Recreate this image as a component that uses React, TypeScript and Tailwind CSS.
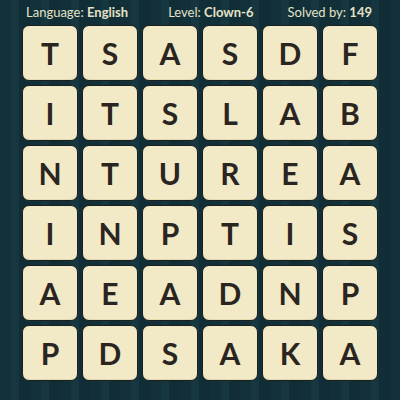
const rows = [
  ["T", "S", "A", "S", "D", "F"],
  ["I", "T", "S", "L", "A", "B"],
  ["N", "T", "U", "R", "E", "A"],
  ["I", "N", "P", "T", "I", "S"],
  ["A", "E", "A", "D", "N", "P"],
  ["P", "D", "S", "A", "K", "A"],
];

export default function App() {
  return (
    <div
      className="w-[400px] h-[400px] overflow-hidden bg-[repeating-linear-gradient(90deg,#12303a_0px,#12303a_11px,#163740_11px,#163740_19px,#112d35_19px,#112d35_30px)] font-['Lato',sans-serif]"
    >
      <div className="h-[25px] flex items-center justify-between pl-[26px] pr-[28px] text-[13px] text-[#e4e2c6] leading-none">
        <span>
          Language: <b className="font-bold">English</b>
        </span>
        <span className="ml-[6px]">
          Level: <b className="font-bold">Clown-6</b>
        </span>
        <span>
          Solved by: <b className="font-bold">149</b>
        </span>
      </div>
      <div className="ml-[22px] w-[356px] grid grid-cols-6 gap-[4px]">
        {rows.flat().map((l, i) => (
          <div
            key={i}
            className="h-[56px] rounded-[7px] bg-[#f2eac7] border-[1.5px] border-[#1b1f1d] shadow-[inset_0_-1px_0_#e2d9b2] flex items-center justify-center text-[30px] font-bold text-[#2b2521]"
          >
            {l}
          </div>
        ))}
      </div>
    </div>
  );
}
